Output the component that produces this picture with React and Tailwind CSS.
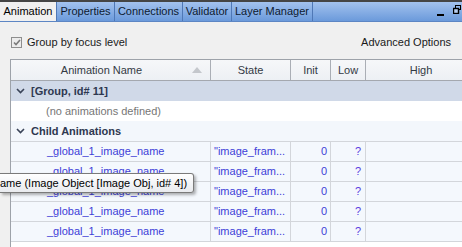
import React from 'react';

const tabs = [
    { label: 'Animation', w: 'w-[57px]', active: true },
    { label: 'Properties', w: 'w-[58px]' },
    { label: 'Connections', w: 'w-[68px]' },
    { label: 'Validator', w: 'w-[49px]' },
    { label: 'Layer Manager', w: 'w-[81px]' },
];

const rows = [1, 2, 3, 4, 5];

const Chevron = () => (
    <svg width="9" height="6" viewBox="0 0 9 6" className="shrink-0">
        <path d="M1 1 L4.5 4.5 L8 1" fill="none" stroke="#3a4458" strokeWidth="1.6" />
    </svg>
);

const App = () => {
    return (
        <div
            className="relative w-[462px] h-[247px] overflow-hidden bg-[#f0f0f0] text-[11px] text-[#1a1a1a]"
            style={{ fontFamily: '"Liberation Sans", Arial, sans-serif' }}
        >
            {/* top strip */}
            <div className="h-[2px] bg-[#454545]" />

            {/* Tab bar */}
            <div className="flex h-[20px] bg-gradient-to-b from-[#a3c2ee] to-[#6b9adb] border-b border-[#5d86c4]">
                {tabs.map((t) => (
                    <div
                        key={t.label}
                        className={`${t.w} shrink-0 flex items-center justify-center border-r border-[#4f78b6] ${
                            t.active ? 'bg-[#f0f0f0] text-black' : 'text-[#0d1a30]'
                        }`}
                    >
                        {t.label}
                    </div>
                ))}
                <div className="flex-1 flex items-start justify-end gap-[9px] pr-[1px] pt-[3px]">
                    <div className="mt-[9px] w-[7px] h-[2px] bg-black" />
                    <svg width="8" height="9" viewBox="0 0 8 9">
                        <rect x="2.5" y="0.5" width="5" height="4" fill="none" stroke="black" />
                        <rect x="0.5" y="3.5" width="5" height="5" fill="#b8cff0" stroke="black" strokeWidth="1.4" />
                    </svg>
                </div>
            </div>

            {/* options row */}
            <div className="flex items-center justify-between h-[37px] pt-[3px] pl-[11px] pr-[11px]">
                <label className="flex items-center gap-[5px]">
                    <span className="w-[11px] h-[11px] border border-[#8e8e8e] bg-[#ececec] flex items-center justify-center">
                        <svg width="8" height="7" viewBox="0 0 8 7">
                            <path d="M1 3.5 L3 5.5 L7 1" fill="none" stroke="#7a7a7a" strokeWidth="1.6" />
                        </svg>
                    </span>
                    <span className="text-[#1a1a1a]">Group by focus level</span>
                </label>
                <span className="text-[#1a1a1a]">Advanced Options</span>
            </div>

            {/* Table */}
            <div className="ml-[10px] border-t border-l border-[#9da2a9] bg-white">
                {/* header */}
                <div className="flex h-[21px] bg-gradient-to-b from-[#f6f7f9] to-[#edf0f4] border-b border-[#a4a8af] text-[#333a44]">
                    <div className="relative w-[200px] shrink-0 flex items-center justify-center pr-[18px] border-r border-[#aaaeb5]">
                        Animation Name
                        <svg width="10" height="6" viewBox="0 0 10 6" className="absolute right-[8px] top-[7px]">
                            <path d="M0 6 L5 0 L10 6 Z" fill="#c4c7cc" />
                        </svg>
                    </div>
                    <div className="w-[80px] shrink-0 flex items-center justify-center border-r border-[#aaaeb5]">State</div>
                    <div className="w-[40px] shrink-0 flex items-center justify-center border-r border-[#aaaeb5]">Init</div>
                    <div className="w-[35px] shrink-0 flex items-center justify-center border-r border-[#aaaeb5]">Low</div>
                    <div className="w-[110px] shrink-0 flex items-center justify-center">High</div>
                </div>

                {/* group row */}
                <div className="flex items-center gap-[6px] h-[20px] bg-[#d0d9e8] pl-[5px] font-bold text-[#2e3850]">
                    <Chevron />
                    [Group, id# 11]
                </div>
                <div className="flex items-center h-[20px] bg-white pl-[35px] text-[#767676]">
                    (no animations defined)
                </div>
                <div className="flex items-center gap-[6px] h-[20px] bg-[#f3f7fc] pl-[5px] font-bold text-[#2e3850]">
                    <Chevron />
                    Child Animations
                </div>

                {/* data rows */}
                <div className="border-b border-[#d3d6db]">
                    {rows.map((r) => (
                        <div key={r} className="flex h-[20px] bg-[#f4f8fd] border-t border-[#d3d6db] text-[#4040d8]">
                            <div className="w-[200px] shrink-0 flex items-center pl-[36px] border-r border-[#d3d6db]">
                                _global_1_image_name
                            </div>
                            <div className="w-[80px] shrink-0 flex items-center pl-[3px] overflow-hidden whitespace-nowrap border-r border-[#d3d6db]">
                                "image_fram...
                            </div>
                            <div className="w-[40px] shrink-0 flex items-center justify-end pr-[3px] border-r border-[#d3d6db]">0</div>
                            <div className="w-[35px] shrink-0 flex items-center justify-end pr-[4px] border-r border-[#d3d6db] text-[#5a3ee0]">?</div>
                            <div className="w-[110px] shrink-0" />
                        </div>
                    ))}
                </div>
            </div>
            <div className="ml-[10px] h-[10px] bg-white border-l border-[#9da2a9]" />

            {/* tooltip */}
            <div className="absolute left-0 top-[173px] h-[20px] flex items-center pr-[6px] bg-gradient-to-b from-white to-[#e9ebef] border border-l-0 border-[#7a7a7a] rounded-r-[3px] shadow-[2px_2px_3px_rgba(0,0,0,0.3)] text-black whitespace-nowrap">
                ame (Image Object [Image Obj, id# 4])
            </div>
        </div>
    );
};

export default App;
